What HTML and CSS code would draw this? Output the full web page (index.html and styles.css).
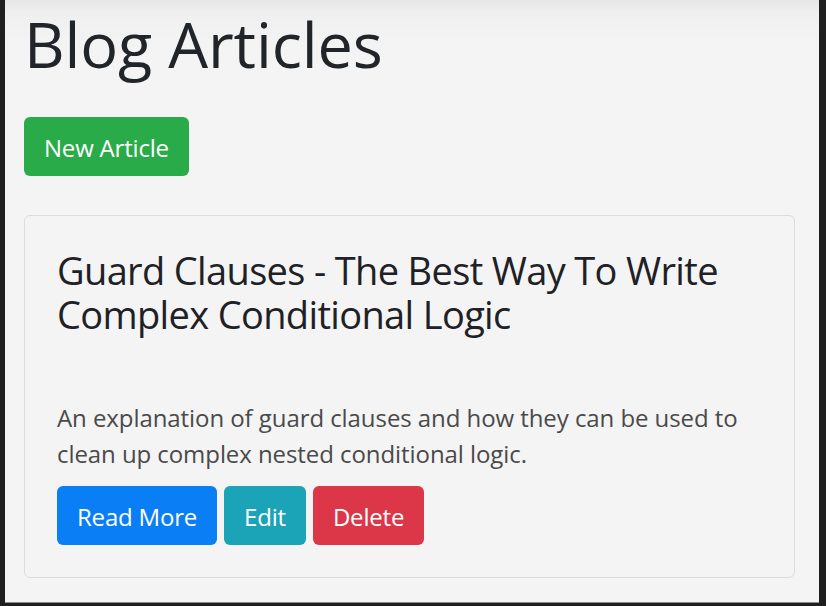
FILE: index.html
```html
<!DOCTYPE html>
<html lang="en">
<head>
<meta charset="utf-8">
<title>Blog Articles</title>
<link rel="stylesheet" href="styles.css">
</head>
<body>
<div class="frame">
  <main class="container">
    <h1 class="page-title">Blog Articles</h1>
    <a class="btn btn-success" href="#">New Article</a>
    <div class="card">
      <div class="card-body">
        <h4 class="card-title">Guard Clauses - The Best Way To Write Complex Conditional Logic</h4>
        <p class="card-text">An explanation of guard clauses and how they can be used to clean up complex nested conditional logic.</p>
        <div class="actions">
          <a class="btn btn-primary" href="#">Read More</a>
          <a class="btn btn-info" href="#">Edit</a>
          <a class="btn btn-danger" href="#">Delete</a>
        </div>
      </div>
    </div>
  </main>
</div>
</body>
</html>
```
FILE: styles.css
```css
html, body {
  margin: 0;
  padding: 0;
  height: 100%;
  background: #1f1f1f;
}
body {
  font-family: "Open Sans", "Noto Sans", sans-serif;
  color: #212529;
}
.frame {
  box-sizing: border-box;
  height: 603px;
  margin-left: 5px;
  margin-right: 7px;
  background: linear-gradient(#e6e6e6 0, #e9e9e9 4px, #efefef 12px, #f3f3f3 40px, #f4f4f4 60px);
  border-bottom: 1px solid #8a8a8a;
}
.container {
  padding: 6px 24px 0 19px;
}
.page-title {
  margin: 0;
  font-size: 63px;
  line-height: 76px;
  font-weight: 400;
  letter-spacing: -0.15px;
}
.btn {
  display: inline-flex;
  align-items: center;
  box-sizing: border-box;
  height: 59px;
  padding: 2px 20px 0 20px;
  border-radius: 6px;
  font-size: 24px;
  letter-spacing: -0.2px;
  color: #fff;
  text-decoration: none;
}
.btn-success { background: #2aab4a; margin-top: 35px; }
.btn-primary { background: #0a7ff5; }
.btn-info { background: #1ba3b7; }
.btn-danger { background: #dc3649; }
.card {
  margin-top: 39px;
  border: 1px solid #dcdcdc;
  border-radius: 6px;
}
.card-body {
  padding: 32px 32px 32px 32px;
}
.card-title {
  margin: 0 0 64px 0;
  font-size: 38px;
  line-height: 44px;
  font-weight: 400;
  letter-spacing: -0.65px;
  color: #1e2125;
}
.card-text {
  margin: 0 0 14px 0;
  font-size: 24px;
  line-height: 36px;
  letter-spacing: -0.07px;
  color: #4a4a4a;
}
.actions {
  display: flex;
  gap: 7px;
}
```
